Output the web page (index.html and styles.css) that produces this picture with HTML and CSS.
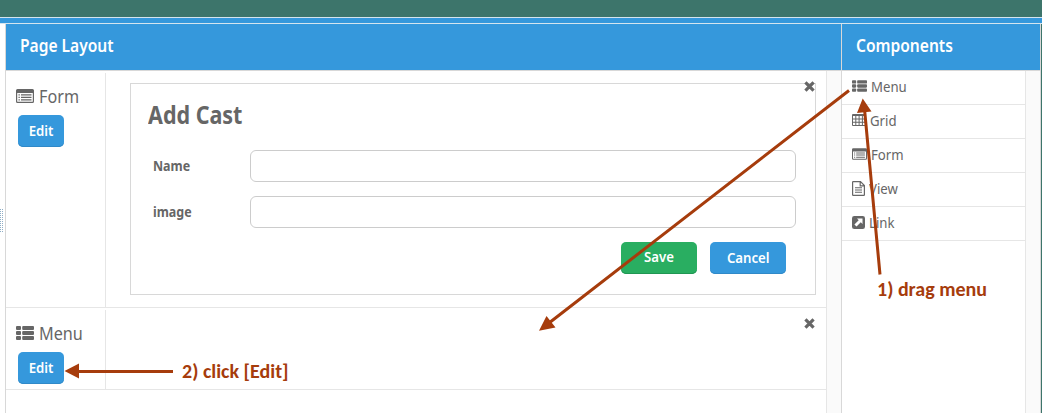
FILE: index.html
```html
<!DOCTYPE html>
<html lang="en">
<head>
<meta charset="utf-8">
<title>Page Layout</title>
<link rel="stylesheet" href="styles.css">
</head>
<body>
<svg class="defs" aria-hidden="true">
  <symbol id="i-menu" viewBox="0 0 18 14"><rect x="0" y="0" width="5" height="4" rx="1"/><rect x="6.2" y="0" width="11.8" height="4" rx="1"/><rect x="0" y="5" width="5" height="4" rx="1"/><rect x="6.2" y="5" width="11.8" height="4" rx="1"/><rect x="0" y="10" width="5" height="4" rx="1"/><rect x="6.2" y="10" width="11.8" height="4" rx="1"/></symbol>
  <symbol id="i-form" viewBox="0 0 18 14"><path fill-rule="evenodd" d="M1.5 0h15A1.5 1.5 0 0 1 18 1.500v11a1.500 1.500 0 0 1-1.500 1.500h-15A1.500 1.500 0 0 1 0 12.500v-11A1.500 1.500 0 0 1 1.500 0zM1.200 4v8.300q0 .5.5.5h14.600q.5 0 .5-.5V4z"/><path d="M2.500 5.200h1.300v1.200H2.500zM5 5.200h10.500v1.200H5zM2.500 7.700h1.300v1.200H2.500zM5 7.700h10.500v1.200H5zM2.500 10.200h1.300v1.200H2.500zM5 10.200h10.500v1.200H5z"/></symbol>
  <symbol id="i-grid" viewBox="0 0 14 12"><path fill-rule="evenodd" d="M1 0h12a1 1 0 0 1 1 1v10a1 1 0 0 1-1 1H1a1 1 0 0 1-1-1V1a1 1 0 0 1 1-1zM1 2v2.500h2.300V2zM4.300 2v2.500h2.300V2zM7.600 2v2.500h2.300V2zM10.900 2v2.500H13V2zM1 5.500v2.300h2.300V5.500zM4.300 5.500v2.300h2.300V5.500zM7.600 5.500v2.300h2.300V5.500zM10.900 5.500v2.300H13V5.500zM1 8.800V11h2.300V8.800zM4.300 8.800V11h2.300V8.800zM7.600 8.800V11h2.300V8.800zM10.900 8.800V11H13V8.800z"/></symbol>
  <symbol id="i-view" viewBox="0 0 13 15"><path d="M.6 1.200q0-.6.6-.6h7.300l3.900 3.900v9.300q0 .6-.6.600H1.200q-.6 0-.6-.6zM8.200.8v4h4" fill="none" stroke="currentColor" stroke-width="1.200"/><path d="M3 6.200h7v1H3zM3 8.500h7v1H3zM3 10.800h7v1H3z"/></symbol>
  <symbol id="i-link" viewBox="0 0 13 13"><rect width="13" height="13" rx="2.300"/><path fill="#fff" d="M5 2.500h5.500V8L8.800 6.300 4.500 10.600 2.400 8.500 6.700 4.200z"/></symbol>
  <symbol id="i-close" viewBox="0 0 10 10"><path d="M1.300 1.300l7.400 7.400m0-7.400l-7.400 7.400" stroke="currentColor" stroke-width="2.900"/></symbol>
</svg>
<div class="app">
  <div class="topbar"></div>
  <div class="ribbon"></div>
  <div class="workspace">
    <div class="gutter"><div class="grip"></div></div>
    <section class="layout">
      <h2 class="panel-title"><span class="t">Page Layout</span></h2>
      <div class="panel-body">
        <div class="rows">
          <div class="row row-form">
            <div class="side">
              <div class="kind"><svg><use href="#i-form"/></svg><span class="t">Form</span></div>
              <button class="btn edit"><span class="t">Edit</span></button>
            </div>
            <div class="content">
              <form class="card">
                <h1><span class="t">Add Cast</span></h1>
                <div class="field"><label><span class="t">Name</span></label><div class="input"></div></div>
                <div class="field"><label><span class="t">image</span></label><div class="input"></div></div>
                <div class="actions"><button type="button" class="btn save"><span class="t">Save</span></button><button type="button" class="btn cancel"><span class="t">Cancel</span></button></div>
              </form>
              <svg class="close"><use href="#i-close"/></svg>
            </div>
          </div>
          <div class="row row-menu">
            <div class="side">
              <div class="kind"><svg><use href="#i-menu"/></svg><span class="t">Menu</span></div>
              <button class="btn edit"><span class="t">Edit</span></button>
            </div>
            <div class="content"><svg class="close"><use href="#i-close"/></svg></div>
          </div>
        </div>
        <div class="track"></div>
      </div>
    </section>
    <section class="components">
      <h2 class="panel-title"><span class="t">Components</span></h2>
      <div class="panel-body">
        <ul class="list">
          <li><svg class="w15"><use href="#i-menu"/></svg><span class="t">Menu</span></li>
          <li><svg class="w14"><use href="#i-grid"/></svg><span class="t">Grid</span></li>
          <li><svg class="w15"><use href="#i-form"/></svg><span class="t">Form</span></li>
          <li><svg class="w13 tall"><use href="#i-view"/></svg><span class="t">View</span></li>
          <li><svg class="w13"><use href="#i-link"/></svg><span class="t">Link</span></li>
        </ul>
        <div class="track"></div>
      </div>
    </section>
    <div class="edge"></div>
  </div>
  <svg class="arrows" viewBox="0 0 1042 413">
    <path d="M849 90.500L549 323M880 274.500L864.500 109M173 371.500H78" fill="none" stroke="#a63c0c" stroke-width="3"/>
    <path d="M539 330.800L546.500 316L555.500 327.500zM862.700 98.500L871.500 111.500L857 113zM64.500 371L79 363.500V378.500z" fill="#a63c0c"/>
  </svg>
  <div class="note drag">1) drag menu</div>
  <div class="note click">2) click [Edit]</div>
</div>
</body>
</html>
```
FILE: styles.css
```css
* { box-sizing: border-box; }
body { margin: 0; background: #fff; color: #666; font: 15px/20px "Noto Sans", "Open Sans", sans-serif; }
.defs { position: absolute; width: 0; height: 0; }
svg { fill: currentColor; flex: none; }
.app { position: relative; width: 1042px; height: 413px; overflow: hidden; display: flex; flex-direction: column; }
.t { display: inline-block; transform: scaleX(.88); transform-origin: left center; white-space: nowrap; }
.topbar { height: 17px; background: #3d756b; }
.ribbon { height: 7px; background: #3598dc; border: solid #d5e5ef; border-width: 1px 0; }
.workspace { flex: 1; display: flex; min-height: 0; }
.gutter { width: 5px; padding-top: 185px; }
.grip { width: 3px; height: 23px; background: conic-gradient(#8faec6 25%, transparent 0) 1px 0 / 2px 2px; }
.layout { width: 836px; display: flex; flex-direction: column; border-left: 1px solid #d8d8d8; }
.components { width: 199px; display: flex; flex-direction: column; border-left: 1px solid #d8d8d8; }
.edge { width: 2px; border-left: 1px solid #d8d8d8; background: #3d756b; }
.panel-title { margin: 0; height: 47px; padding: 0 14px 4px; display: flex; align-items: center; background: #3598dc; border-bottom: 1px solid #d8d8d8; color: #fff; font-size: 18px; font-weight: 600; }
.panel-title .t { transform: scaleX(.865); }
.panel-body { flex: 1; display: flex; min-height: 0; }
.rows { width: 820px; }
.track { flex: 1; background: #fafafa; border-left: 1px solid #e6e6e6; }
.row { display: flex; border-bottom: 1px solid #e6e6e6; padding-top: 2px; }
.row-form { height: 237px; }
.row-menu { height: 82px; }
.side { width: 100px; border-right: 1px solid #e6e6e6; padding: 11px 0 0 10px; }
.kind { height: 25px; display: flex; align-items: center; gap: 5px; font-size: 18px; padding-bottom: 2px; }
.kind svg { width: 18px; height: 14px; }
.kind .t { transform: scaleX(.9); }
.btn { border: 0; border-radius: 5px; background: #3598dc; box-shadow: inset 0 -1px #3089c8; color: #fff; font: 600 15px/20px "Noto Sans", sans-serif; height: 32px; padding: 0 0 2px; display: flex; justify-content: center; align-items: center; }
.btn .t { transform-origin: center; }
.edit { width: 46px; margin: 6px 0 0 2px; }
.content { flex: 1; display: flex; justify-content: flex-end; position: relative; padding: 10px 10px 0 24px; }
.close { position: absolute; right: 11px; top: 8px; width: 11px; height: 11px; }
.card { width: 686px; height: 212px; border: 1px solid #d8d8d8; padding: 14px 19px 0 17px; }
h1 { margin: 0; height: 52px; font-size: 25px; line-height: 32px; }
h1 .t { transform: scaleX(.86); }
.field { display: flex; height: 46px; padding-left: 5px; }
label { width: 97px; font-weight: 700; line-height: 30px; }
label .t { transform: scaleX(.83); }
.input { width: 546px; height: 32px; border: 1px solid #ccc; border-radius: 6px; }
.actions { display: flex; justify-content: flex-end; gap: 13px; padding-right: 10px; }
.save, .cancel { width: 76px; }
.save { background: #29ae61; box-shadow: inset 0 -1px #209653; padding-bottom: 4px; }
.list { margin: 0; padding: 0; width: 183px; list-style: none; }
.list li { height: 34px; display: flex; align-items: center; gap: 4px; padding: 0 0 4px 10px; border-bottom: 1px solid #e6e6e6; }
.list .w14, .list .w13 { margin-top: 1px; }
.w15 { width: 15px; height: 12px; }
.w14 { width: 14px; height: 12px; }
.w13 { width: 13px; height: 13px; }
.tall { height: 15px; }
.arrows { position: absolute; inset: 0; width: 1042px; height: 413px; }
.note { position: absolute; color: #a63c0c; font: 700 20px/22px Carlito, Lato, sans-serif; white-space: nowrap; }
.drag { left: 877px; top: 278px; }
.click { left: 182px; top: 360px; }
```
